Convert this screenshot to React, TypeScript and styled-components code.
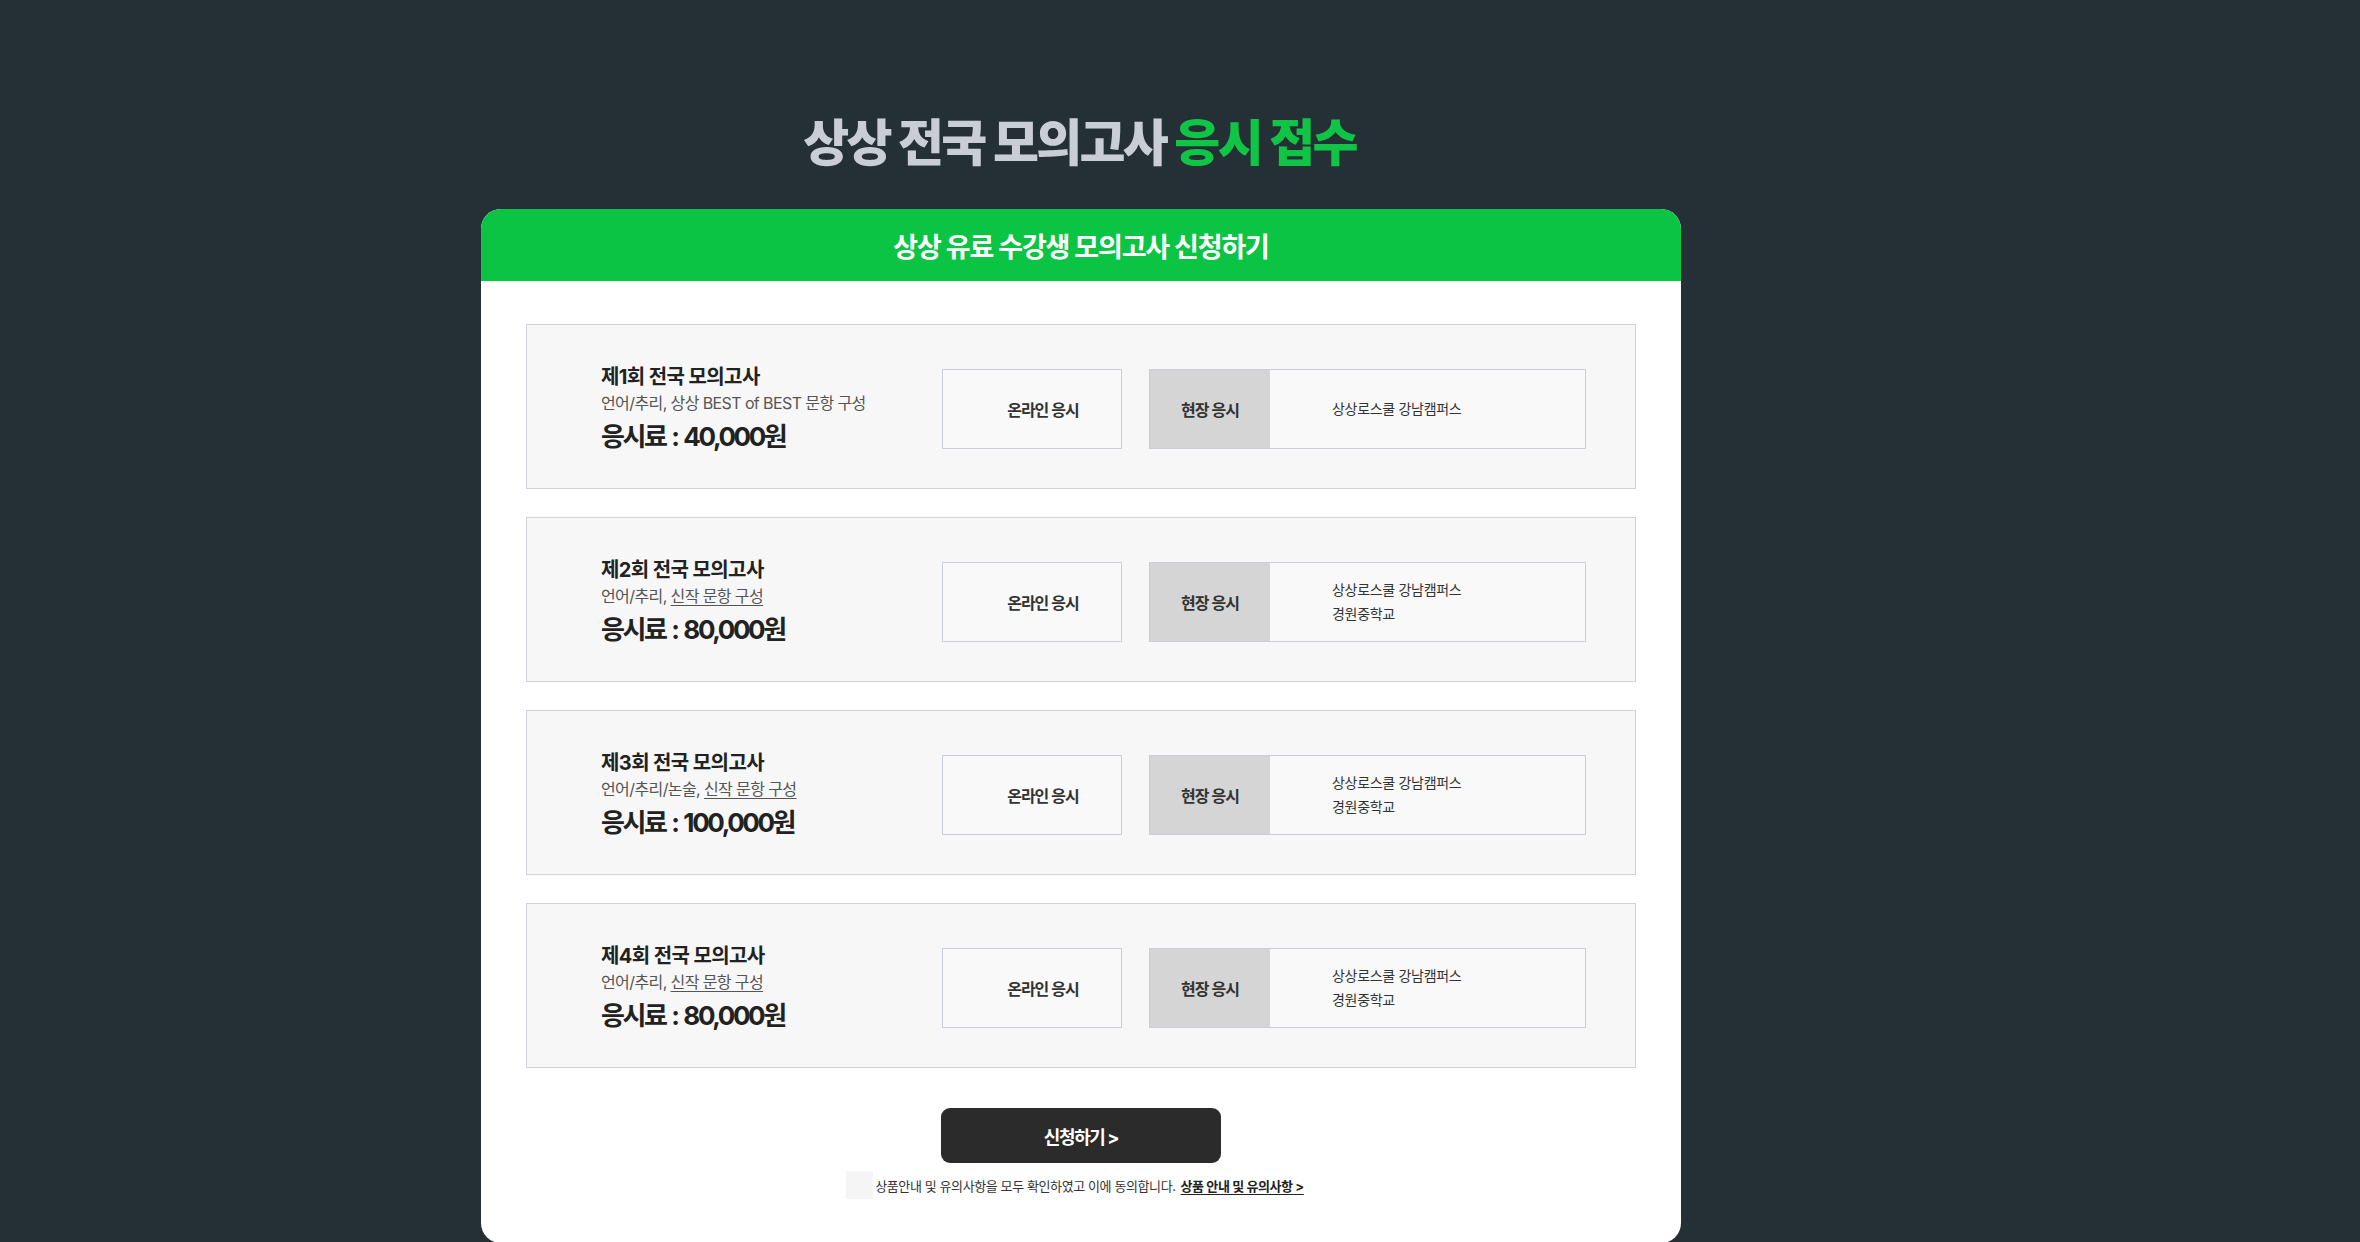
import React from "react";
import styled, { createGlobalStyle } from "styled-components";

const GlobalStyle = createGlobalStyle`
  html, body {
    margin: 0;
    padding: 0;
    background: #252f36;
  }
  body {
    font-family: Inter, "Noto Sans CJK KR", sans-serif;
    color: #222;
  }
  * { box-sizing: border-box; }
`;

const Page = styled.div`
  min-height: 100vh;
  background: #252f36;
  padding: 0 198px 0 0;
  display: flex;
  flex-direction: column;
  align-items: center;
`;

const PageTitle = styled.h1`
  margin: 0;
  padding-top: 114px;
  padding-right: 3px;
  height: 209px;
  font-size: 50px;
  line-height: 58px;
  font-weight: 800;
  letter-spacing: -2.7px;
  color: #c9ced6;
  text-align: center;
`;

const Accent = styled.span`
  color: #10c546;
`;

const Panel = styled.section`
  width: 1200px;
  background: #ffffff;
  border-radius: 20px;
  overflow: hidden;
`;

const PanelHeader = styled.div`
  height: 72px;
  background: #0cc443;
  display: flex;
  align-items: center;
  justify-content: center;
  color: #ffffff;
  font-size: 27px;
  font-weight: 700;
  letter-spacing: -1.2px;
`;

const PanelBody = styled.div`
  padding: 43px 45px 44px;
  display: flex;
  flex-direction: column;
  align-items: stretch;
`;

const CardList = styled.div`
  display: flex;
  flex-direction: column;
  gap: 28px;
`;

const Card = styled.div`
  height: 165px;
  border: 1px solid #cfd1db;
  background: #f7f7f7;
  padding: 44px 49px 39px 75px;
  display: flex;
  align-items: center;
`;

const Info = styled.div`
  flex: 1;
  display: flex;
  flex-direction: column;
  margin-top: -1px;
  margin-left: -1px;
`;

const CardTitle = styled.div`
  font-size: 20px;
  line-height: 26px;
  font-weight: 700;
  letter-spacing: -0.6px;
  color: #222;
`;

const CardDesc = styled.div`
  margin-top: 2px;
  font-size: 16px;
  line-height: 22px;
  font-weight: 400;
  letter-spacing: -0.6px;
  color: #555;
`;

const Underlined = styled.span`
  text-decoration: underline;
  text-underline-offset: 3px;
  text-decoration-thickness: 1px;
`;

const Price = styled.div`
  margin-top: 7px;
  font-size: 26px;
  line-height: 32px;
  font-weight: 700;
  letter-spacing: -2.4px;
  word-spacing: 2px;
  color: #222;
`;

const OnlineBox = styled.div`
  width: 180px;
  height: 80px;
  border: 1px solid #c9ced8;
  background: #f9f9fa;
  display: flex;
  align-items: center;
  justify-content: center;
  padding-left: 22px;
  font-size: 16px;
  font-weight: 600;
  letter-spacing: -1px;
  color: #333;
  margin-right: 27px;
`;

const SiteBox = styled.div`
  width: 437px;
  height: 80px;
  border: 1px solid #c9ced8;
  background: #f9f9fa;
  display: flex;
  align-items: stretch;
`;

const SiteLabel = styled.div`
  width: 120px;
  background: #d5d5d6;
  display: flex;
  align-items: center;
  justify-content: center;
  font-size: 16px;
  font-weight: 600;
  letter-spacing: -1px;
  color: #333;
`;

const SiteList = styled.div`
  flex: 1;
  display: flex;
  flex-direction: column;
  justify-content: center;
  padding-left: 62px;
  font-size: 14px;
  line-height: 24px;
  letter-spacing: -0.3px;
  color: #333;
`;

const SubmitButton = styled.button`
  align-self: center;
  margin-top: 40px;
  width: 280px;
  height: 55px;
  border: none;
  border-radius: 9px;
  background: #2b2b2b;
  color: #ffffff;
  font-family: Inter, "Noto Sans CJK KR", sans-serif;
  font-size: 18px;
  font-weight: 700;
  letter-spacing: -1.4px;
  cursor: pointer;
`;

const AgreeRow = styled.label`
  margin-top: 8px;
  height: 28px;
  display: flex;
  align-items: center;
  justify-content: center;
  gap: 2px;
  padding-right: 12px;
  font-size: 13px;
  letter-spacing: -0.4px;
  color: #333;
`;

const Check = styled.input`
  appearance: none;
  -webkit-appearance: none;
  margin: 0;
  width: 27px;
  height: 28px;
  background: #f5f5f5;
  border: none;
`;

const AgreeLink = styled.a`
  margin-left: 3px;
  font-weight: 700;
  color: #222;
  text-decoration: underline;
  text-underline-offset: 3px;
`;

type Exam = {
  no: number;
  prefix: string;
  underline?: string;
  price: string;
  sites: string[];
};

const exams: Exam[] = [
  { no: 1, prefix: "언어/추리, 상상 BEST of BEST 문항 구성", price: "40,000", sites: ["상상로스쿨 강남캠퍼스"] },
  { no: 2, prefix: "언어/추리, ", underline: "신작 문항 구성", price: "80,000", sites: ["상상로스쿨 강남캠퍼스", "경원중학교"] },
  { no: 3, prefix: "언어/추리/논술, ", underline: "신작 문항 구성", price: "100,000", sites: ["상상로스쿨 강남캠퍼스", "경원중학교"] },
  { no: 4, prefix: "언어/추리, ", underline: "신작 문항 구성", price: "80,000", sites: ["상상로스쿨 강남캠퍼스", "경원중학교"] },
];

export default function App() {
  return (
    <>
      <GlobalStyle />
      <Page>
        <PageTitle>
          상상 전국 모의고사 <Accent>응시 접수</Accent>
        </PageTitle>
        <Panel>
          <PanelHeader>상상 유료 수강생 모의고사 신청하기</PanelHeader>
          <PanelBody>
            <CardList>
              {exams.map((e) => (
                <Card key={e.no}>
                  <Info>
                    <CardTitle>제{e.no}회 전국 모의고사</CardTitle>
                    <CardDesc>
                      {e.prefix}
                      {e.underline && <Underlined>{e.underline}</Underlined>}
                    </CardDesc>
                    <Price>응시료 : {e.price}원</Price>
                  </Info>
                  <OnlineBox>온라인 응시</OnlineBox>
                  <SiteBox>
                    <SiteLabel>현장 응시</SiteLabel>
                    <SiteList>
                      {e.sites.map((s) => (
                        <div key={s}>{s}</div>
                      ))}
                    </SiteList>
                  </SiteBox>
                </Card>
              ))}
            </CardList>
            <SubmitButton type="button">신청하기 &gt;</SubmitButton>
            <AgreeRow>
              <Check type="checkbox" />
              <span>상품안내 및 유의사항을 모두 확인하였고 이에 동의합니다.</span>
              <AgreeLink href="#">상품 안내 및 유의사항 &gt;</AgreeLink>
            </AgreeRow>
          </PanelBody>
        </Panel>
      </Page>
    </>
  );
}
